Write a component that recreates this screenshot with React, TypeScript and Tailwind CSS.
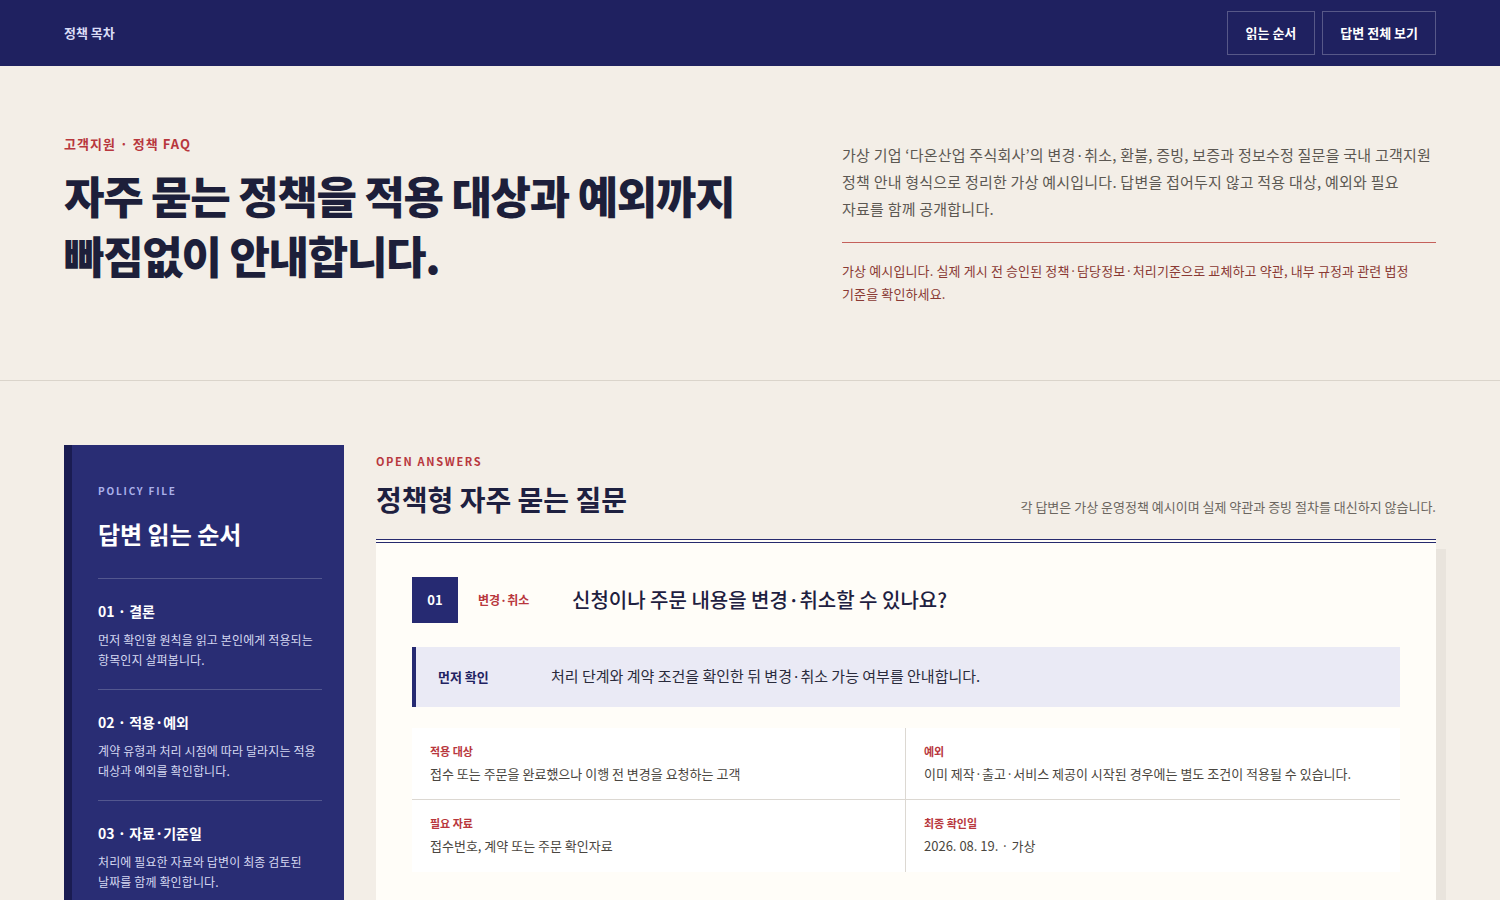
import React from 'react';

// Policy FAQ page - hero + reading guide + open answers

const guideSteps = [
  { no: '01', title: '결론', desc: '먼저 확인할 원칙을 읽고 본인에게 적용되는 항목인지 살펴봅니다.' },
  { no: '02', title: '적용·예외', desc: '계약 유형과 처리 시점에 따라 달라지는 적용 대상과 예외를 확인합니다.' },
  { no: '03', title: '자료·기준일', desc: '처리에 필요한 자료와 답변이 최종 검토된 날짜를 함께 확인합니다.' },
];

const answers = [
  {
    no: '01',
    category: '변경·취소',
    question: '신청이나 주문 내용을 변경·취소할 수 있나요?',
    summary: '처리 단계와 계약 조건을 확인한 뒤 변경·취소 가능 여부를 안내합니다.',
    facts: [
      { label: '적용 대상', value: '접수 또는 주문을 완료했으나 이행 전 변경을 요청하는 고객' },
      { label: '예외', value: '이미 제작·출고·서비스 제공이 시작된 경우에는 별도 조건이 적용될 수 있습니다.' },
      { label: '필요 자료', value: '접수번호, 계약 또는 주문 확인자료' },
      { label: '최종 확인일', value: '2026. 08. 19. · 가상' },
    ],
  },
];

export default function App() {
  return (
    <div className="min-h-screen break-keep bg-[#f3eee7] text-[#1e2040] font-['Noto_Sans_CJK_KR','Noto_Sans',sans-serif]">
      {/* Top bar */}
      <header className="h-[66px] bg-[#1f2160] flex items-center justify-between px-16">
        <span className="text-[13px] font-bold text-[#d9dcf6]">정책 목차</span>
        <nav className="flex items-center gap-[7px]">
          <button className="h-[44px] px-[18px] border border-white/25 text-[13px] font-bold text-white">읽는 순서</button>
          <button className="h-[44px] px-[17px] border border-white/25 text-[13px] font-bold text-white">답변 전체 보기</button>
        </nav>
      </header>

      {/* Hero */}
      <section className="border-b border-[#dad4cb] px-16 pt-[68px] pb-[75px] grid grid-cols-[1fr_594px] gap-[62px]">
        <div>
          <p className="text-[13px] font-bold text-[#b8373d] tracking-[0.08em]">고객지원 · 정책 FAQ</p>
          <h1 className="mt-[11px] text-[44px] leading-[60px] font-black tracking-[-0.03em] text-[#1d1f3a]">
            자주 묻는 정책을 적용 대상과 예외까지
            <br />
            빠짐없이 안내합니다.
          </h1>
        </div>
        <div className="pt-[7px]">
          <p className="text-[15px] leading-[27px] tracking-[0.015em] text-[#5c5852]">
            가상 기업 ‘다온산업 주식회사’의 변경·취소, 환불, 증빙, 보증과 정보수정 질문을 국내 고객지원 정책 안내 형식으로 정리한 가상 예시입니다. 답변을 접어두지 않고 적용 대상, 예외와 필요 자료를 함께 공개합니다.
          </p>
          <div className="mt-[20px] border-t border-[#c4605b] pt-[16px]">
            <p className="text-[13px] leading-[23px] tracking-[0.01em] text-[#8a3a34]">
              가상 예시입니다. 실제 게시 전 승인된 정책·담당정보·처리기준으로 교체하고 약관, 내부 규정과 관련 법정 기준을 확인하세요.
            </p>
          </div>
        </div>
      </section>

      {/* Body */}
      <section className="px-16 pt-16 pb-16 grid grid-cols-[280px_1fr] gap-8 items-start">
        {/* Reading guide */}
        <aside className="bg-[#292d74] border-l-[8px] border-[#1a1c52] pl-[26px] pr-[22px] pt-[38px] pb-[28px]">
          <p className="text-[10px] font-semibold tracking-[0.18em] text-[#aab1ea]">POLICY FILE</p>
          <h2 className="mt-[20px] text-[24px] font-bold text-white leading-[32px]">답변 읽는 순서</h2>
          <div className="mt-[28px]">
            {guideSteps.map((step) => (
              <div key={step.no} className="border-t border-white/20 pt-[21px] pb-[19px]">
                <p className="text-[14px] font-bold text-white leading-[22px]">
                  {step.no} · {step.title}
                </p>
                <p className="mt-[8px] text-[12px] leading-[20px] tracking-[0.01em] text-[#d5d8f1]">{step.desc}</p>
              </div>
            ))}
          </div>
        </aside>

        {/* Answers */}
        <div className="pt-[8px]">
          <div className="flex items-end justify-between">
            <div>
              <p className="text-[11px] font-bold tracking-[0.15em] text-[#b8373d]">OPEN ANSWERS</p>
              <h2 className="mt-[10px] text-[28px] font-bold leading-[38px] text-[#1e2040]">정책형 자주 묻는 질문</h2>
            </div>
            <p className="text-[13px] text-[#6b665f] pb-[1px]">각 답변은 가상 운영정책 예시이며 실제 약관과 증빙 절차를 대신하지 않습니다.</p>
          </div>

          <div className="mt-[21px] flex flex-col gap-8">
            {answers.map((item) => (
              <article
                key={item.no}
                className="bg-[#fffdf8] border-t-[4px] border-double border-[#262a6e] shadow-[10px_10px_0_#e9e4dd] px-9 pt-[34px] pb-10"
              >
                <div className="grid grid-cols-[46px_74px_1fr] gap-5 items-center">
                  <div className="h-[46px] bg-[#262a72] flex items-center justify-center text-[13px] font-bold text-white">
                    {item.no}
                  </div>
                  <span className="text-[12px] font-bold text-[#b8373d]">{item.category}</span>
                  <h3 className="text-[20px] font-medium text-[#1e2040]">{item.question}</h3>
                </div>

                <div className="mt-6 h-[60px] bg-[#eaeaf5] border-l-[4px] border-[#262a72] flex items-center pl-[22px]">
                  <span className="w-[113px] text-[13px] font-bold text-[#1f2262]">먼저 확인</span>
                  <p className="text-[15px] text-[#2a2b3c]">{item.summary}</p>
                </div>

                <div className="mt-[21px] grid grid-cols-2">
                  {item.facts.map((fact, i) => (
                    <div
                      key={fact.label}
                      className={`bg-white h-[72px] pl-[18px] pt-[14px] ${i % 2 === 0 ? 'border-r border-[#dcd8d2]' : ''} ${i < 2 ? 'border-b border-[#dcd8d2]' : ''}`}
                    >
                      <p className="text-[11px] font-bold leading-[18px] text-[#b8373d]">{fact.label}</p>
                      <p className="mt-[4px] text-[13px] leading-[20px] text-[#4a4640]">{fact.value}</p>
                    </div>
                  ))}
                </div>
              </article>
            ))}
          </div>
        </div>
      </section>
    </div>
  );
}
